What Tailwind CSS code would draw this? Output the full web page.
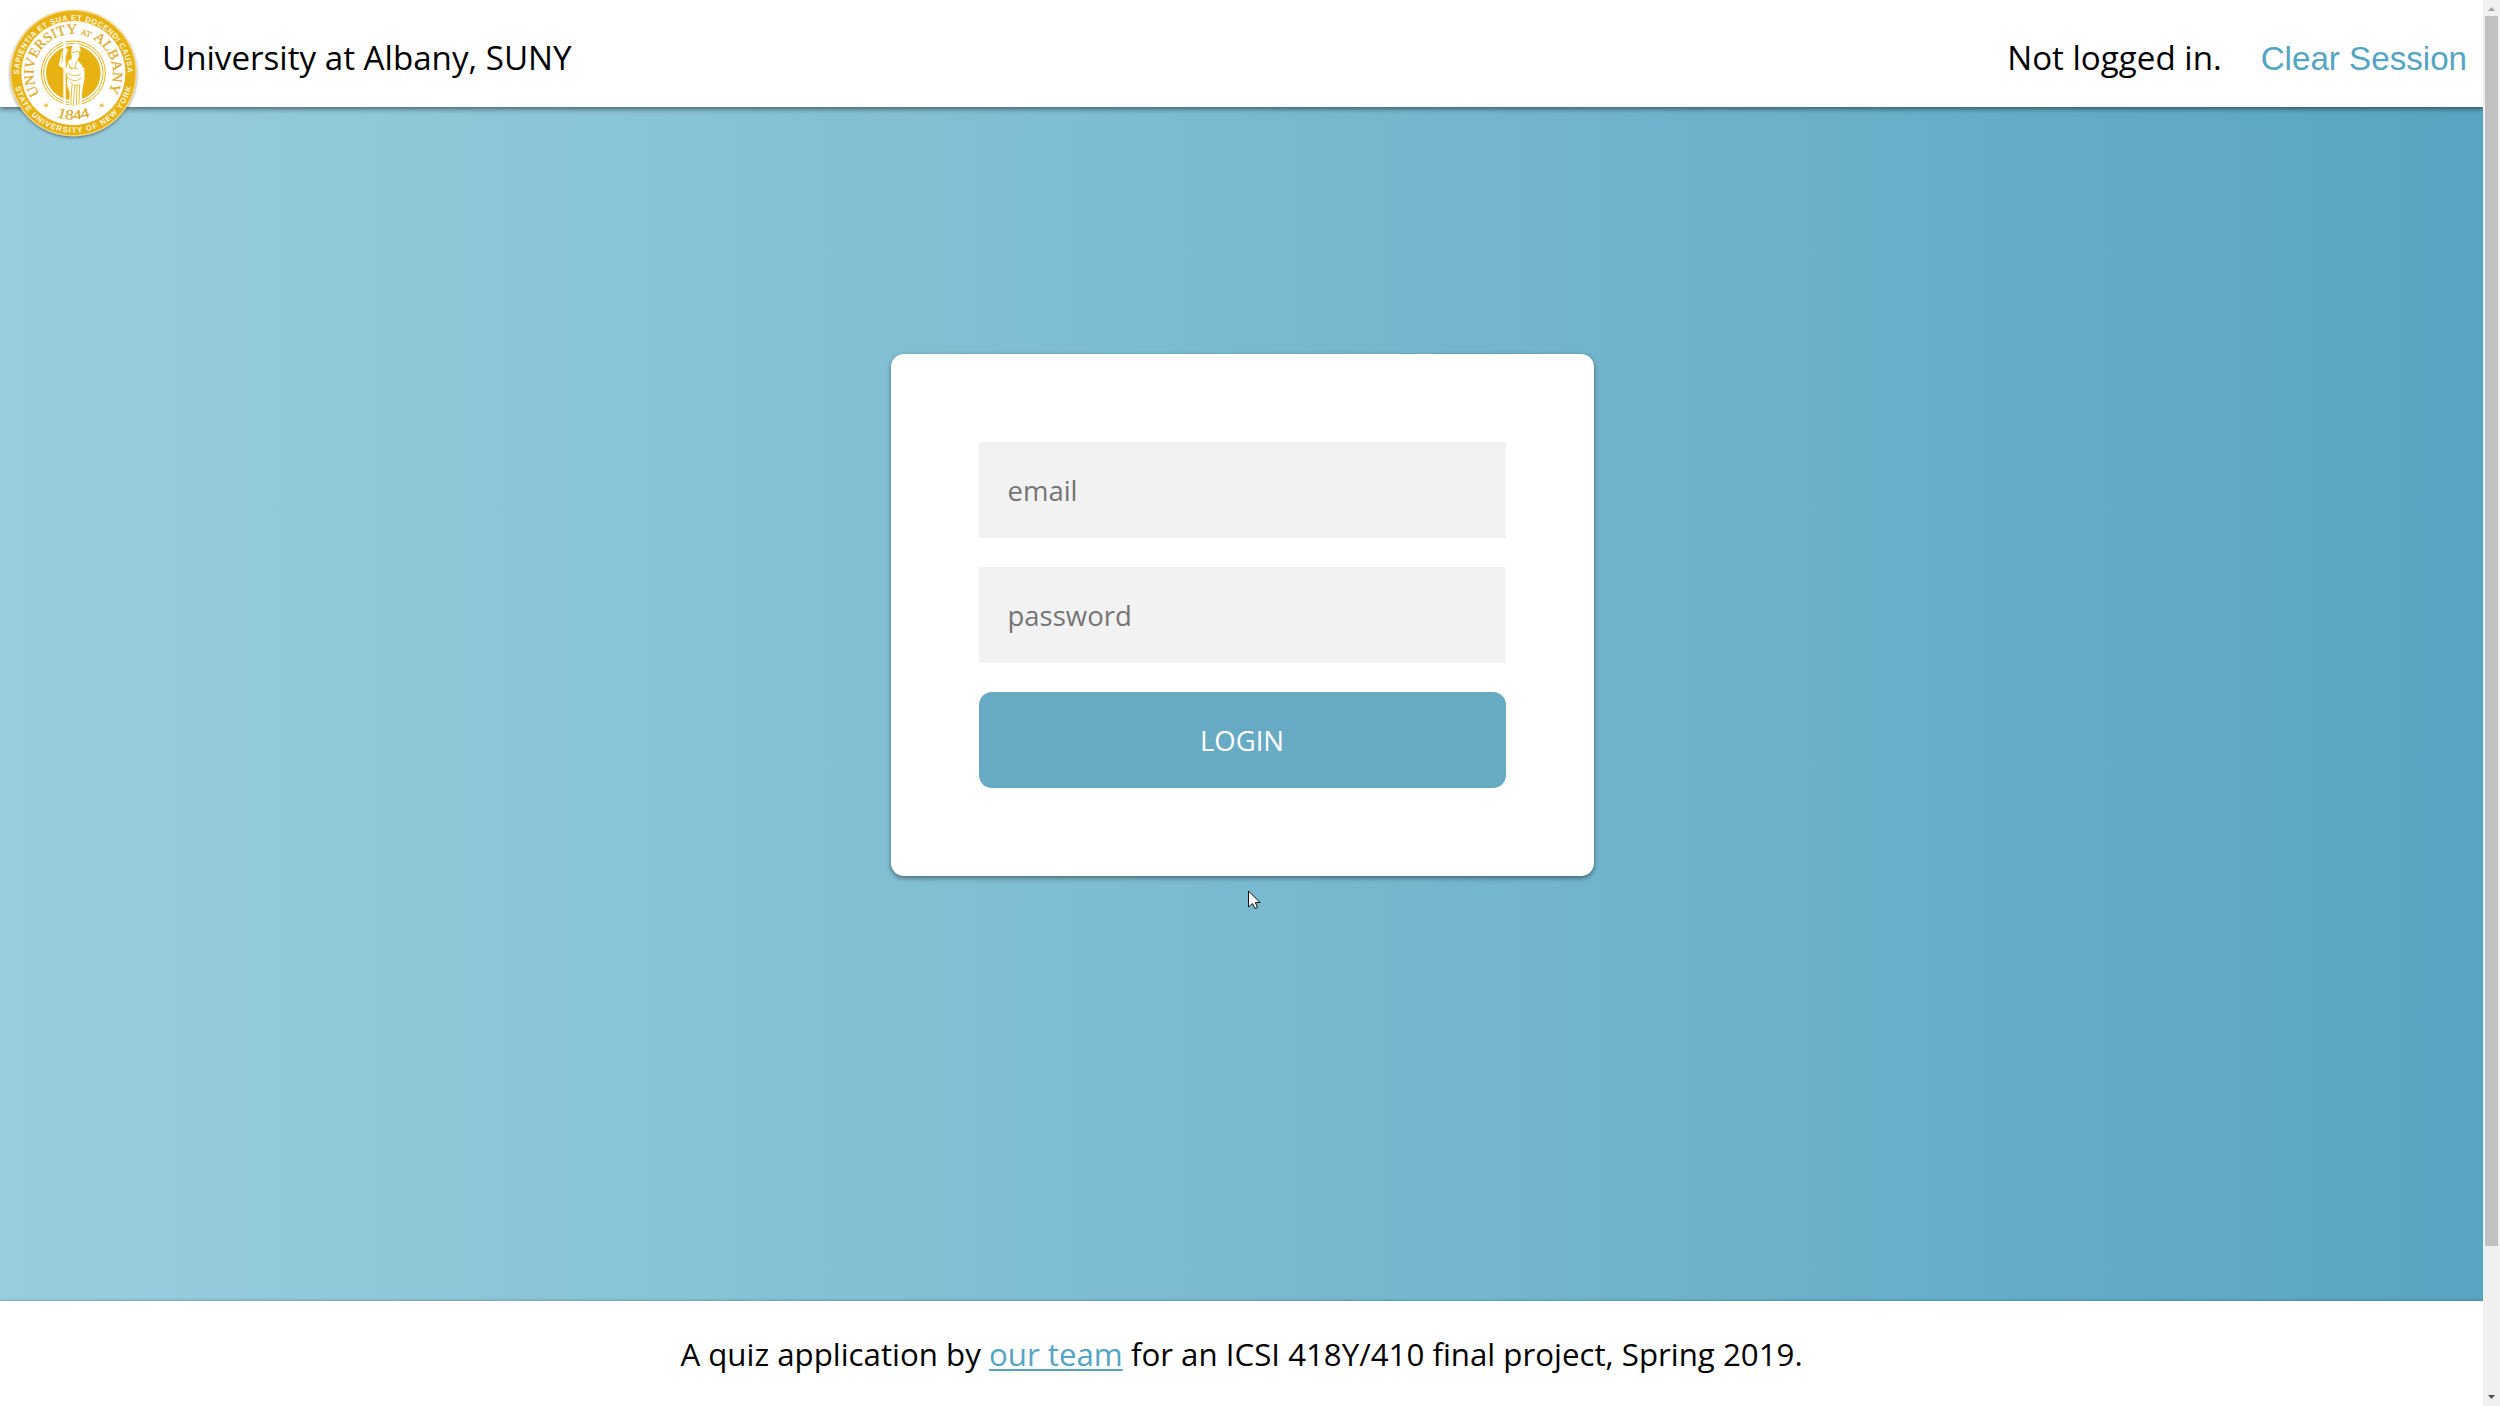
<!DOCTYPE html>
<html lang="en">
<head>
<meta charset="utf-8">
<title>University at Albany, SUNY</title>
<script src="https://cdn.jsdelivr.net/npm/@tailwindcss/browser@4"></script>
</head>
<body class="flex h-[1406px] w-[2500px] overflow-hidden bg-white font-['Open_Sans',sans-serif] font-normal text-black">
<div class="flex h-full w-[2483px] flex-col">
  <header class="relative z-10 flex h-[107px] shrink-0 items-center justify-between bg-white pt-[9px] pr-4 pl-[162px] text-[33.15px] shadow-[0_2px_5px_rgba(0,0,0,0.5)]">
    <svg class="absolute top-0 left-0" width="150" height="150" viewBox="0 0 450 450">
      <defs>
        <filter id="sh" x="-10%" y="-10%" width="120%" height="125%"><feDropShadow dx="0" dy="4" stdDeviation="5" flood-color="#000" flood-opacity="0.45"/></filter>
        <path id="topOuter" d="M57 224A163 163 0 1 1 383 224"/>
        <path id="botOuter" d="M41 219A179 179 0 0 0 399 219"/>
        <path id="topInner" d="M119 283A119 119 0 1 1 321 283"/>
        <path id="botInner" d="M80 219A140 140 0 0 0 360 219"/>
      </defs>
      <circle cx="220" cy="219" r="190" fill="#f3d47e" filter="url(#sh)"/>
      <circle cx="220" cy="219" r="186" fill="#e9b213"/>
      <circle cx="220" cy="219" r="156" fill="#fff"/>
      <circle cx="220" cy="219" r="96" fill="none" stroke="#e9b213" stroke-width="3"/>
      <circle cx="220" cy="219" r="89" fill="none" stroke="#e9b213" stroke-width="3"/>
      <circle cx="220" cy="219" r="82" fill="#e9b213"/>
      <g fill="#fff8e2" font-family="Liberation Sans Narrow, Liberation Sans, sans-serif" font-weight="700" font-size="23">
        <text textLength="506"><textPath href="#topOuter">SAPIENTIA ET SUA ET DOCENDI CAUSA</textPath></text>
        <text textLength="478"><textPath href="#botOuter" startOffset="42">STATE UNIVERSITY OF NEW YORK</textPath></text>
      </g>
      <g fill="#dfa91b" stroke="#dfa91b" stroke-width=".7" font-family="Liberation Serif, serif" font-size="42">
        <text textLength="498" lengthAdjust="spacingAndGlyphs"><textPath href="#topInner">UNIVERSITY <tspan font-size="24">AT</tspan> ALBANY</textPath></text>
        <text textLength="104" lengthAdjust="spacingAndGlyphs"><textPath href="#botInner" startOffset="168">1844</textPath></text>
      </g>
      <circle cx="138" cy="316" r="6" fill="#efc75c"/><circle cx="305" cy="316" r="6" fill="#efc75c"/>
      <path fill="#fff" d="M190 124h7v190h-7zM176 196l9-38 10-14 9 4-5 16-6 20 5 18-10 2-9-5zM214 148l6-14 8-7 8 8 7 19-6 2 1 13-6 11 13 14 9 22-1 23-6 31-2 46h-38l2-38-8-25 1-24-5-17 7-28 12-9-2-13z"/>
      <path fill="none" stroke="#e9b213" stroke-width="2.5" d="M215 158l24-5M201 181q8 20 16 30M205 201l34 7M202 218q18 16 40 4M201 231q20 20 43 4M211 249q12 12 29 6M216 255l-4 60M224 258l-4 57M231 258l-2 57M239 254l-2 60M231 182l-7 24M188 158l-2 30"/>
      <path fill="#fff" d="M232 203h20l2 8-20 6z"/>
    </svg>
    <span>University at Albany, SUNY</span>
    <div class="flex items-baseline gap-[39px]">
      <span>Not logged in.</span>
      <a class="font-['Liberation_Sans',sans-serif] text-[33.15px] text-[#54a4c3]">Clear Session</a>
    </div>
  </header>
  <main class="flex h-[1194px] shrink-0 justify-center bg-linear-to-r/srgb from-[#99cddd] via-[#7abad0] to-[#58a5c1] pt-[247px] pl-px">
    <form class="flex h-[522px] w-[703px] flex-col gap-[29px] rounded-[13px] bg-white p-[88px] shadow-[0_2px_5px_rgba(0,0,0,0.45)]">
      <input class="h-24 w-full shrink-0 bg-[#f2f2f2] px-[29px] text-[27.5px] placeholder:text-[#757575] placeholder:opacity-100" type="text" placeholder="email">
      <input class="h-24 w-full shrink-0 bg-[#f2f2f2] px-[29px] text-[27.5px] placeholder:text-[#757575] placeholder:opacity-100" type="password" placeholder="password">
      <button class="h-24 w-full shrink-0 rounded-[13px] bg-[#67aac3] pt-0.5 text-[27.5px] text-white" type="button">LOGIN</button>
    </form>
  </main>
  <footer class="relative flex flex-1 items-center justify-center bg-white pt-0.5 text-[31.25px] shadow-[0_0_3px_rgba(0,0,0,0.35)]">
    <p>A quiz application by <a class="text-[#54a4c3] underline decoration-2 underline-offset-3">our team</a> for an ICSI 418Y/410 final project, Spring 2019.</p>
  </footer>
</div>
<aside class="relative z-20 flex w-[17px] flex-col items-center justify-between bg-[#f0f0f0]">
  <svg width="17" height="16" viewBox="0 0 17 16"><path d="M5 11l3.500-4 3.500 4z" fill="#a3a3a3"/></svg>
  <div class="h-[1230px] w-[13px] bg-[#c1c1c1]"></div>
  <div class="flex-1"></div>
  <svg width="17" height="17" viewBox="0 0 17 17"><path d="M5 6h7l-3.500 4z" fill="#505050"/></svg>
</aside>
<svg class="absolute top-[890px] left-[1248px] z-30" width="13" height="20" viewBox="0 0 13 20"><path d="M.5 1v16l4-3.500 2.500 5 2.500-1-2.200-5H12z" fill="#fff" stroke="#111"/></svg>
</body>
</html>
